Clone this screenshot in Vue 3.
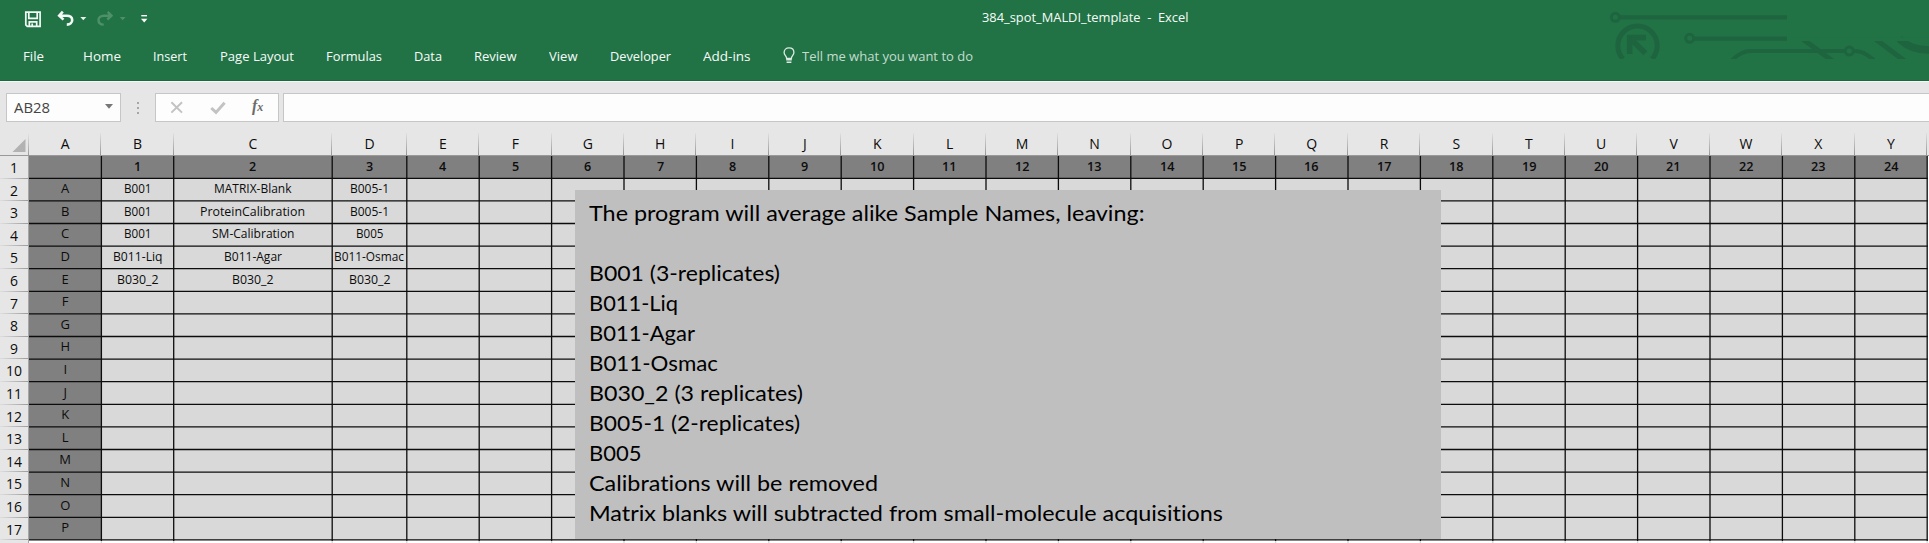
<script setup>
import { computed } from 'vue'

// Scales a label horizontally so its advance equals the given width.
const vFit = {
  mounted(el, { value }) {
    if (!value) return
    const natural = el.getBoundingClientRect().width
    el.style.width = value + 'px'
    el.style.transform = `scaleX(${value / natural})`
  },
}

const tabs = [
  ['File', 21], ['Home', 38], ['Insert', 34], ['Page Layout', 74], ['Formulas', 56],
  ['Data', 28], ['Review', 42.5], ['View', 28.5], ['Developer', 61], ['Add-ins', 47.5],
]

const letters = 'ABCDEFGHIJKLMNOPQRSTUVWXY'.split('')
const widths = [72.4, 72.3, 158.5, 74.6, ...Array(21).fill(72.4)]
const columnTemplate = computed(() => widths.map((w) => w + 'px').join(' '))
const edges = computed(() => {
  let x = 0
  return widths.map((w) => (x += w))
})

const samples = [
  [['B001', 27.5], ['MATRIX-Blank', 77.5], ['B005-1', 39]],
  [['B001', 27.5], ['ProteinCalibration', 105], ['B005-1', 39]],
  [['B001', 27.5], ['SM-Calibration', 82.5], ['B005', 27.5]],
  [['B011-Liq', 49.5], ['B011-Agar', 58], ['B011-Osmac', 70]],
  [['B030_2', 41.5], ['B030_2', 41.5], ['B030_2', 41.5]],
]

const rows = Array.from({ length: 17 }, (_, r) =>
  letters.map((_, c) => {
    if (r === 0) return c === 0 ? null : [String(c), c > 9 ? 14.5 : 7.2]
    if (c === 0) return [letters[r - 1], 0]
    return (samples[r - 1] || [])[c - 1] || null
  }),
)
const rowEdges = Array.from({ length: 17 }, (_, i) => 22.3 + i * 22.6)

const note = [
  ['The program will average alike Sample Names, leaving:', 555.5],
  ['', 0],
  ['B001 (3-replicates)', 191],
  ['B011-Liq', 89],
  ['B011-Agar', 106],
  ['B011-Osmac', 129],
  ['B030_2 (3 replicates)', 214],
  ['B005-1 (2-replicates)', 211],
  ['B005', 52.5],
  ['Calibrations will be removed', 289],
  ['Matrix blanks will subtracted from small-molecule acquisitions', 634],
]
</script>

<template>
  <div class="window">
    <header class="ribbon">
      <svg class="circuit" viewBox="0 0 1107 180" fill="none">
        <circle cx="166" cy="52" r="12" stroke-width="9" />
        <path d="M178 52H681M401 116H681" stroke-width="13" />
        <circle cx="389" cy="115" r="12" stroke-width="9" />
        <path d="M189 177A59 59 0 1 1 276 177" stroke-width="15" />
        <path d="M209 162V113H258" stroke-width="17" />
        <path d="M209 113L256 160" stroke-width="17" />
        <path d="M516 180Q545 153 570 153H853M882 153Q903 153 920 164L942 180" stroke-width="12" />
        <circle cx="868" cy="153" r="12" stroke-width="9" />
        <path d="M728 117L818 183M946 117L1034 183" stroke-width="15" />
        <path d="M1018 117Q1052 150 1107 150" stroke-width="22" />
        <path class="mask" d="M700 112H1107V123H700zM500 177H1107V190H500zM160 177H300V190H160z" />
      </svg>
      <div class="titlebar">
        <svg class="qat" viewBox="0 0 150 36" fill="none">
          <g stroke="#f4faf6" stroke-width="1.7">
            <path d="M25.8 12.1H40.1V26.3H27.3L25.8 24.8z" />
            <path d="M28.8 12V18.4H37.2V12M29.3 26V21.8H36.7V26M32.2 26V23.5" />
          </g>
          <path d="M62.8 11.7L59.2 15.7L63.5 19.6M59.6 15.7H67C70 15.7 72.2 17.4 72.2 20C72.2 22.8 70 24.6 66.8 24.6" stroke="#f4faf6" stroke-width="2.6" />
          <path d="M80.3 17H86.3L83.3 20.2z" fill="#e8f2ec" />
          <path d="M107.7 11.9L111.5 15.7L107.3 19.5M111 15.7H104C100.6 15.7 98.5 17.6 98.5 20C98.5 22.8 100.5 24.6 103.7 24.6" stroke="#4d9069" stroke-width="2.4" />
          <path d="M119.8 17H125.6L122.7 20.2z" fill="#4d9069" />
          <path d="M141.3 15.7H147" stroke="#fff" stroke-width="1.4" />
          <path d="M141 18.8H147.4L144.2 22.4z" fill="#fff" />
        </svg>
        <span v-fit="206.5" class="title fit">384_spot_MALDI_template&nbsp; -&nbsp; Excel</span>
      </div>
      <nav class="tabs">
        <span v-for="[label, w] in tabs" :key="label" v-fit="w" class="fit">{{ label }}</span>
        <span class="tell">
          <svg viewBox="0 0 12 18" fill="none" stroke="#dcebe2">
            <path d="M3.6 11.3C3.6 8.8 1.1 8.4 1.1 5.5C1.1 2.7 3.2 .9 6 .9S10.9 2.7 10.9 5.5C10.9 8.4 8.4 8.8 8.4 11.3z" stroke-width="1.3" />
            <path d="M3.2 12.8H8.8M3.6 15.2H8.4" stroke-width="1.5" />
          </svg>
          <span v-fit="171" class="fit">Tell me what you want to do</span>
        </span>
      </nav>
    </header>

    <div class="formula">
      <div class="namebox">
        <span v-fit="36" class="fit">AB28</span>
        <svg viewBox="0 0 8 5"><path d="M0 0H8L4 4.8z" fill="#777" /></svg>
      </div>
      <svg class="dots" viewBox="0 0 4 12" fill="#a6a6a6"><path d="M1 0h2v2H1zM1 5h2v2H1zM1 10h2v2H1z" /></svg>
      <div class="actions">
        <svg viewBox="0 0 122 26" fill="none">
          <path d="M15.4 8.3L26 18.6M26 8.3L15.4 18.6" stroke="#c3c3c3" stroke-width="2" />
          <path d="M55.3 14L60 18.4L68.6 8.8" stroke="#c3c3c3" stroke-width="3" />
        </svg>
        <span class="fx">f<small>x</small></span>
      </div>
      <div class="entry"></div>
    </div>

    <main class="sheet">
      <div class="colheads">
        <div class="corner"><svg viewBox="0 0 14 14"><path d="M14 0V14H0z" fill="#b2b2b2" /></svg></div>
        <div class="colgrid" :style="{ gridTemplateColumns: columnTemplate }">
          <span v-for="l in letters" :key="l" class="colhead">{{ l }}</span>
        </div>
      </div>
      <div class="body">
        <div class="rowheads">
          <span v-for="n in 17" :key="n" class="rowhead"><b v-fit="n > 9 ? 16 : 8" class="fit">{{ n }}</b></span>
        </div>
        <div class="cells">
          <div v-for="(row, r) in rows" :key="r" class="row" :class="{ top: r === 0 }" :style="{ gridTemplateColumns: columnTemplate }">
            <span v-for="(cell, c) in row" :key="c" class="cell" :class="{ label: c === 0 || r === 0 }">
              <span v-if="cell" v-fit="cell[1]" class="fit">{{ cell[0] }}</span>
            </span>
          </div>
          <svg class="lines" width="1900" height="388">
            <path v-for="x in edges" :key="'g' + x" :d="`M${x} 385V388`" stroke="#d8d8d8" />
            <path v-for="x in edges" :key="x" :d="`M${x} 0V385`" />
            <path v-for="y in rowEdges" :key="'r' + y" :d="`M0 ${y}H1898.8`" />
          </svg>
          <div class="note">
            <p v-for="(line, i) in note" :key="i"><span v-fit="line[1]" class="fit">{{ line[0] }}</span></p>
          </div>
        </div>
      </div>
    </main>
  </div>
</template>

<style>
body { overflow: hidden; }
</style>

<style scoped>
.window { position: relative; width: 1929px; height: 543px; overflow: hidden; background: #e6e6e6; font-family: "Open Sans", "Noto Sans", sans-serif; font-variant-ligatures: none; color: #0c0c0c; }
.fit { display: inline-block; white-space: nowrap; transform-origin: 0 50%; }

.ribbon { position: relative; height: 81px; box-sizing: border-box; background: #217346; border-bottom: 1px solid #1b6a3e; color: #f8fcf9; box-shadow: 0 1px 0 #f6f6f6; }
.circuit { position: absolute; left: 1560px; top: 0; width: 369px; height: 60px; stroke: #1e653f; }
.circuit .mask { fill: #217346; stroke: none; }
.titlebar { display: flex; height: 36px; }
.qat { width: 150px; height: 36px; }
.title { margin-left: 831.5px; font-size: 13px; font-weight: 500; line-height: 35px; }
.tabs { display: flex; gap: 32.3px; padding-left: 22.5px; font-size: 13.2px; font-weight: 500; line-height: 40px; height: 40px; }
.tabs > .fit:first-child { margin-right: 7.2px; }
.tell { display: flex; align-items: flex-start; gap: 7px; color: #c5dccf; }
.tell svg { width: 12px; height: 18px; margin-top: 11px; }

.formula { display: flex; height: 29px; padding-top: 12px; }
.formula > div { box-sizing: border-box; height: 29px; border: 1px solid #c6c6c6; background: #fdfdfd; }
.namebox { display: flex; align-items: center; justify-content: space-between; width: 115px; margin-left: 6px; padding: 0 7px 0 7px; font-size: 14px; color: #444; }
.namebox svg { width: 8px; height: 5px; margin-top: -2px; }
.dots { width: 4px; height: 12px; margin: 9px 15px 0 15px; }
.actions { position: relative; width: 124px; }
.actions svg { width: 122px; height: 26px; display: block; }
.fx { position: absolute; left: 96px; top: 1px; font: italic bold 16px/22px "Liberation Serif", serif; color: #6c6c6c; }
.fx small { font-size: 12px; }
.entry { flex: 1; margin-left: 4px; border-right: 0 !important; }

.sheet { padding-top: 11px; }
.colheads { display: flex; height: 23px; box-sizing: border-box; border-bottom: 1px solid #999; }
.corner { width: 29px; box-sizing: border-box; padding: 6px 0 0 11.5px; background: linear-gradient(#e6e6e6, #9c9c9c) right / 1px 100% no-repeat; }
.corner svg { width: 14px; height: 13px; display: block; }
.colgrid { display: grid; }
.colhead { height: 22px; text-align: center; font-size: 14px; line-height: 21px; background: linear-gradient(#e0e0e0, #969696) right / 1px 100% no-repeat; }

.body { display: flex; height: 387px; }
.rowheads { width: 28px; border-right: 1px solid #a6a6a6; }
.rowhead { display: flex; justify-content: center; height: 22.6px; font-size: 14.2px; line-height: 23.6px; background: linear-gradient(90deg, #dedede, #9c9c9c) bottom / 100% 1px no-repeat; }
.rowhead b { font-weight: 400; }
.cells { position: relative; width: 1900px; background: #fff; }
.row { display: grid; height: 22.6px; }
.row.top { height: 22.3px; }
.cell { display: flex; justify-content: center; background: #d9d9d9; font-size: 12.5px; font-weight: 500; line-height: 22px; overflow: hidden; }
.cell.label { background: #808080; font-size: 13px; line-height: 21px; }
.top .cell.label { font-weight: 600; line-height: 20.8px; }
.lines { position: absolute; left: 0; top: 0; fill: none; stroke: #0c0c0c; stroke-width: 1.3; }
.note { position: absolute; left: 546px; top: 34px; width: 866px; height: 349px; box-sizing: border-box; padding: 8px 0 0 14px; background: #bfbfbf; color: #000; font-family: Lato, sans-serif; font-size: 21.8px; }
.note p { height: 30px; margin: 0; line-height: 30px; }
</style>
